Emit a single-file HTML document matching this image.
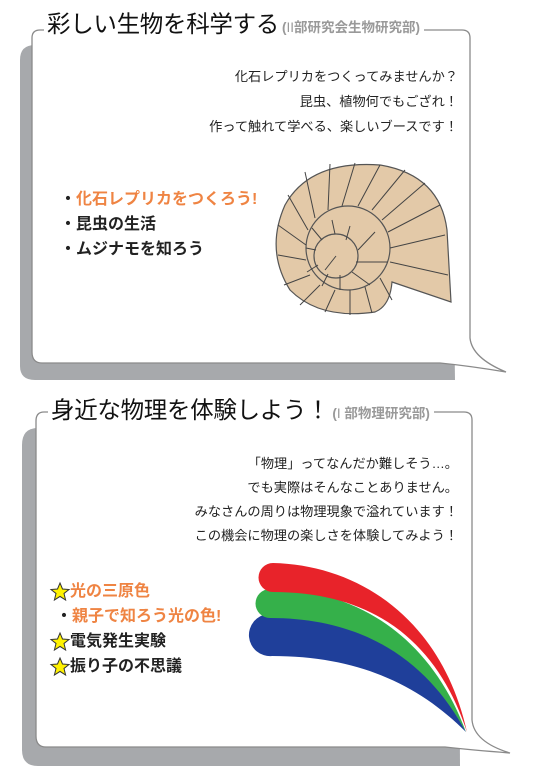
<!DOCTYPE html>
<html><head><meta charset="utf-8"><style>
html,body{margin:0;padding:0;background:#fff;}
body{width:545px;height:771px;position:relative;overflow:hidden;font-family:"Liberation Sans","Noto Sans CJK JP",sans-serif;}
.abs{position:absolute;white-space:nowrap;}
.hd{background:#fff;padding:0 4px 0 3px;display:flex;align-items:flex-end;}
.title{font-size:23.5px;color:#111;letter-spacing:-0.3px;line-height:30px;}
.sub{font-size:13.5px;font-weight:bold;color:#999;line-height:22px;margin-left:3px;}
.body{font-size:13.2px;color:#222;text-align:right;line-height:25px;}
.list{font-size:16px;font-weight:bold;line-height:25px;color:#222;}
.or{color:#ef8443;}
</style></head><body>
<svg class="abs" style="left:0;top:0" width="545" height="771">
 <path d="M20 60 Q20 45 35 45 L450 45 L455 380 L35 380 Q20 380 20 366 Z" fill="#a7a9ac"/>
 <path d="M40 30 L462 30 Q470 30 470 38 L470 338 Q472 358 506 372 Q470 366 440 363 L42 363 Q32 363 32 352 L32 38 Q32 30 40 30 Z" fill="#fff" stroke="#8a8a8a" stroke-width="1.3"/>
 <path d="M22 445 Q22 428 38 428 L458 428 L460 766 L38 766 Q22 766 22 750 Z" fill="#a7a9ac"/>
 <path d="M44 412 L464 412 Q472 412 472 420 L472 720 Q474 742 510 753 Q472 750 445 747 L46 747 Q36 747 36 736 L36 421 Q36 412 44 412 Z" fill="#fff" stroke="#8a8a8a" stroke-width="1.3"/>
 <g stroke="#555" stroke-width="1.2" fill="#e3c9a8">
  <path d="M451 302 L447 230 Q440 175 380 165 Q310 160 285 205 Q265 250 290 290 Q320 320 375 312 Q390 306 392 282 Z"/>
  <circle cx="348" cy="248" r="42"/>
  <circle cx="336" cy="256" r="22"/>
 </g>
 <g stroke="#444" stroke-width="1" fill="none">
  <path d="M390 248 L445 235"/><path d="M388 232 L440 205"/><path d="M382 220 L425 183"/>
  <path d="M372 210 L405 170"/><path d="M358 206 L380 165"/><path d="M342 206 L355 163"/>
  <path d="M328 210 L330 164"/><path d="M315 218 L305 172"/><path d="M308 230 L288 195"/>
  <path d="M306 245 L278 225"/><path d="M306 260 L278 255"/><path d="M310 275 L284 285"/>
  <path d="M320 285 L300 305"/><path d="M335 290 L325 312"/><path d="M350 290 L350 315"/>
  <path d="M365 287 L372 313"/><path d="M380 278 L392 300"/><path d="M390 262 L448 275"/>
  <path d="M358 250 L375 232"/><path d="M356 262 L388 262"/><path d="M352 272 L370 285"/>
  <path d="M340 275 L340 290"/><path d="M328 274 L322 286"/><path d="M318 265 L307 272"/>
  <path d="M316 250 L306 248"/><path d="M322 240 L312 228"/><path d="M335 234 L332 220"/>
  <path d="M346 240 L350 226"/><path d="M336 256 L325 270"/>
 </g>
 <path d="M268 614 C360 614 428 660 466 732 C420 686 360 656 272 656 A21 21 0 0 1 268 614 Z" fill="#1f3f9a"/>
 <path d="M270 589 C360 589 432 640 466 732 C430 666 370 618 270 618 A14.5 14.5 0 0 1 270 589 Z" fill="#35b04a"/>
 <path d="M273 563 C360 565 442 620 467 732 C440 650 382 592 273 592 A14.5 14.5 0 0 1 273 563 Z" fill="#e8232a"/>
 <g fill="#fff200" stroke="#333" stroke-width="1">
  <path d="M60 583 L62.5 589 L69 589.5 L64 593.5 L65.6 600 L60 596.4 L54.4 600 L56 593.5 L51 589.5 L57.5 589 Z"/>
  <path d="M60 633 L62.5 639 L69 639.5 L64 643.5 L65.6 650 L60 646.4 L54.4 650 L56 643.5 L51 639.5 L57.5 639 Z"/>
  <path d="M60 658 L62.5 664 L69 664.5 L64 668.5 L65.6 675 L60 671.4 L54.4 675 L56 668.5 L51 664.5 L57.5 664 Z"/>
 </g>
</svg>

<div class="abs hd" style="left:44px;top:9px;"><span class="title">彩しい生物を科学する</span><span class="sub">(<span style="font-weight:normal">II</span>部研究会生物研究部)</span></div>
<div class="abs body" style="right:87px;top:64px;">化石レプリカをつくってみませんか？<br>昆虫、植物何でもござれ！<br>作って触れて学べる、楽しいブースです！</div>
<div class="abs list" style="left:60px;top:187px;"><span>・</span><span class="or">化石レプリカをつくろう!</span><br>・昆虫の生活<br>・ムジナモを知ろう</div>

<div class="abs hd" style="left:48px;top:395px;"><span class="title">身近な物理を体験しよう！</span><span class="sub">(<span style="font-weight:normal">I</span> 部物理研究部)</span></div>
<div class="abs body" style="right:87px;top:452px;line-height:24px;">「物理」ってなんだか難しそう…。<br>でも実際はそんなことありません。<br>みなさんの周りは物理現象で溢れています！<br>この機会に物理の楽しさを体験してみよう！</div>
<div class="abs list" style="left:70px;top:579px;"><span class="or">光の三原色</span><br><span style="margin-left:-14px">・</span><span class="or">親子で知ろう光の色!</span><br>電気発生実験<br>振り子の不思議</div>
</body></html>
